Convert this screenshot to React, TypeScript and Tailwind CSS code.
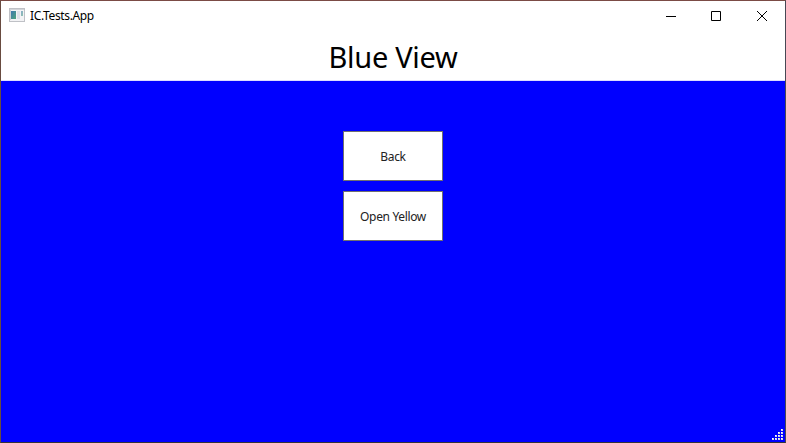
import React from "react";

const gripDots = [
  [9, 0],
  [6, 3], [9, 3],
  [3, 6], [6, 6], [9, 6],
  [0, 9], [3, 9], [6, 9], [9, 9],
];

function AppIcon() {
  return (
    <svg width="16" height="14" viewBox="0 0 16 14" shapeRendering="crispEdges" className="mb-px">
      <defs>
        <linearGradient id="pane" x1="0" y1="0" x2="1" y2="1">
          <stop offset="0" stopColor="#3f78b0" />
          <stop offset="1" stopColor="#4fa57c" />
        </linearGradient>
      </defs>
      <rect x="0.5" y="0.5" width="15" height="13" fill="#f3f3f5" stroke="#bfc1c6" />
      <rect x="1" y="1" width="14" height="1" fill="#d3d5d9" />
      <rect x="1" y="2" width="1" height="10" fill="#cfd2d6" />
      <rect x="2" y="3" width="5" height="8" fill="url(#pane)" />
      <rect x="8" y="3" width="3" height="8" fill="#dfe1e8" />
      <rect x="12" y="3" width="2" height="5" fill="url(#pane)" opacity="0.6" />
    </svg>
  );
}

function TitleBar() {
  return (
    <header className="flex h-[29px] shrink-0 items-center justify-between pl-2">
      <div className="flex items-center gap-[5px]">
        <AppIcon />
        <span className="text-[12px] leading-4 tracking-[-0.35px]">IC.Tests.App</span>
      </div>
      <div className="flex h-full">
        {["M0 5.5H10", "M0.5 0.5H9.5V9.5H0.5Z", "M0 0L10 10M10 0L0 10"].map((d, i) => (
          <button key={d} className={i === 0 ? "flex w-[45px] items-center justify-center" : "flex w-[46px] items-center justify-center"}>
            <svg width="10" height="10" className="overflow-visible" fill="none" stroke="#000" strokeWidth="1">
              <path d={d} />
            </svg>
          </button>
        ))}
      </div>
    </header>
  );
}

function ViewButton({ children }: { children: React.ReactNode }) {
  return (
    <button className="h-[50px] w-[100px] border border-[#707070] bg-white pt-[2px] text-center text-[12px] leading-4 tracking-[-0.35px] text-[#222]">
      {children}
    </button>
  );
}

export default function App() {
  return (
    <div className="relative flex h-[443px] w-[786px] flex-col border border-t-[#7b4b45] border-r-[#484854] border-b-[#33333b] border-l-[#684b40] bg-white font-['Noto_Sans',sans-serif] text-black">
      <TitleBar />
      <h1 className="h-[50px] shrink-0 text-center text-[29px] leading-[54px] tracking-[-0.3px]">Blue View</h1>
      <main className="flex flex-1 flex-col items-center gap-[10px] border-t border-[#dcdcff] bg-[#0000ff] pt-[50px]">
        <ViewButton>Back</ViewButton>
        <ViewButton>Open Yellow</ViewButton>
      </main>
      <svg className="absolute right-[2px] bottom-[2px]" width="11" height="11" shapeRendering="crispEdges">
        {gripDots.map(([x, y]) => (
          <g key={`${x}-${y}`}>
            <rect x={x} y={y} width="2" height="2" fill="#d8d8e0" />
            <rect x={x} y={y} width="1" height="1" fill="#fff" />
          </g>
        ))}
      </svg>
    </div>
  );
}
